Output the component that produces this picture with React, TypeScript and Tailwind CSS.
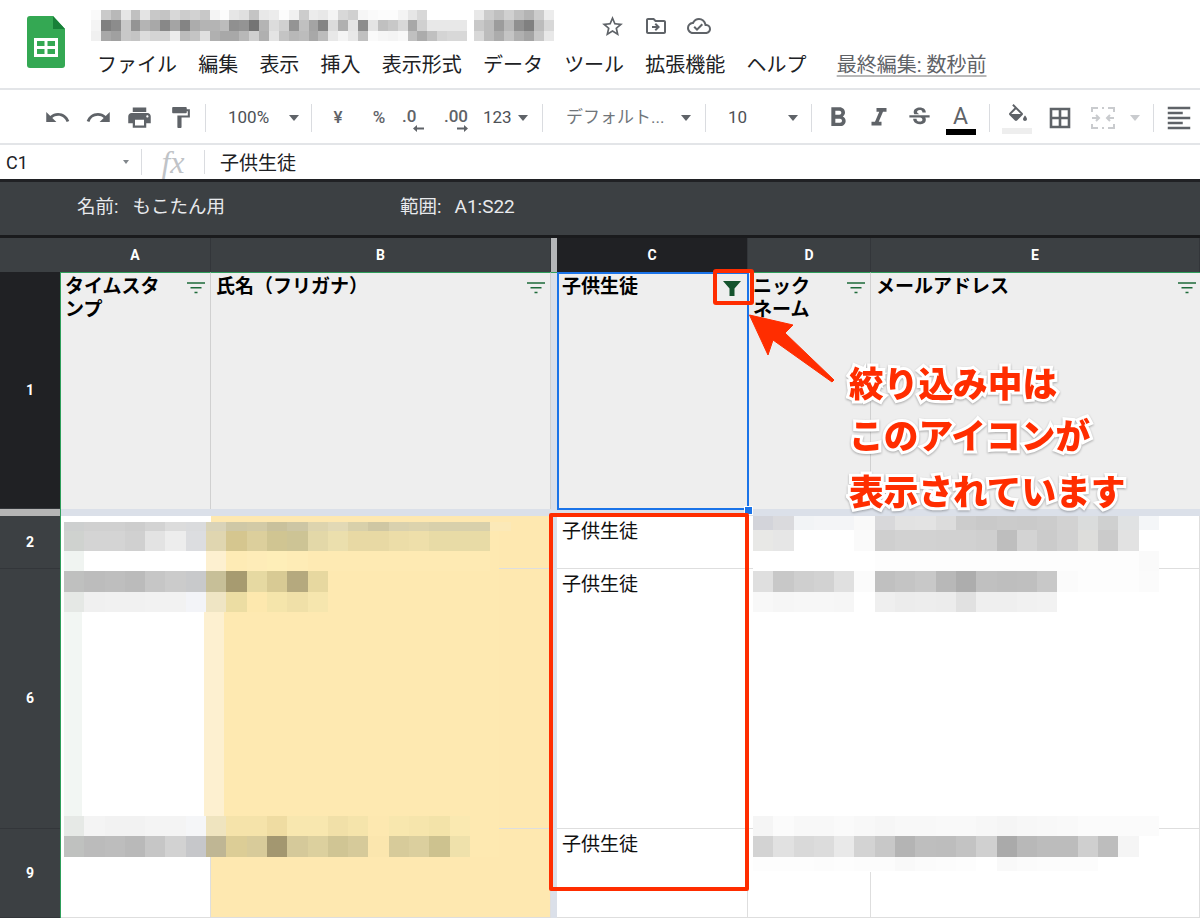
import type { ReactNode } from "react"
import {
  MdUndo,
  MdRedo,
  MdPrint,
  MdFormatPaint,
  MdFormatBold,
  MdFormatItalic,
  MdStrikethroughS,
  MdFormatAlignLeft,
  MdStarBorder,
  MdOutlineDriveFileMove,
  MdOutlineCloudDone,
} from "react-icons/md"

const font = "font-['Roboto','Noto_Sans_CJK_JP',sans-serif]"

// pixelated blur blocks: [height, colours...]
type MosaicRow = { h: number; c: string }

const titleLeft: MosaicRow[] = [
  { h: 10, c: "fafafa cacaca b8b8b8 e6e6e6 c0c0c0 e4e4e4 c8c8c8 c4c4c4 d8d8d8 cccccc d2d2d2 c8c8c8 f4f4f4 fcfcfc e6e6e6 e0e0e0 c4c4c4 e8e8e8 ececec fcfcfc f0f0f0 cccccc ececec e8e8e8 f4f4f4 d8d8d8 d0d0d0 f6f6f6 fafafa fcfcfc fcfcfc f4f4f4 e6e6e6 d8d8d8 ffffff ffffff ffffff ffffff" },
  { h: 11, c: "f4f4f4 808080 8c8c8c c8c8c8 949494 b4b4b4 a8a8a8 888888 a4a4a4 848484 acacac b4b4b4 b4b4b4 bcbcbc 909090 949494 747474 b4b4b4 dcdcdc d0d0d0 949494 c0c0c0 a4a4a4 848484 dcdcdc b0b0b0 e4e4e4 8c8c8c e4e4e4 c0c0c0 c8c8c8 d8d8d8 a8a8a8 d0d0d0 e8e8e8 e8e8e8 e8e8e8 e8e8e8" },
  { h: 10, c: "f0f0f0 a8a8a8 a0a0a0 c8c8c8 c4c4c4 dcdcdc d4d4d4 d4d4d4 ececec bcbcbc c4c4c4 e0e0e0 b0b0b0 a8a8a8 a8a8a8 b8b8b8 d0d0d0 b0b0b0 e4e4e4 c4c4c4 b8b8b8 bcbcbc a8a8a8 bcbcbc e8e8e8 f4f4f4 e8e8e8 c0c0c0 fafafa f6f6f6 f4f4f4 f8f8f8 c0c0c0 acacac c0c0c0 d4d4d4 d8d8d8 d8d8d8" },
]

const titleRight: MosaicRow[] = [
  { h: 10, c: "e8e8e8 cccccc c0c0c0 d0d0d0 c0c0c0 b4b4b4 cccccc ececec" },
  { h: 11, c: "c8c8c8 bcbcbc 9c9c9c b8b8b8 909090 808080 bcbcbc d8d8d8" },
  { h: 10, c: "d8d8d8 bcbcbc acacac c4c4c4 b0b0b0 a4a4a4 c8c8c8 e8e8e8" },
]

const leftTop: MosaicRow[] = [
  { h: 9, c: "cdcfcf d0d0d0 d0d0d0 cdcdcd d3d3d3 dcdcdc dadbdd d9d3b8 cfc8a6 d2caa6 c9c19c cdc6a4 ddd4ae e2d9b5 d8d0aa cfc7a3 d9d1ae dcd3ad d8d0ab d8d0ab d8d0ab fbe9b8" },
  { h: 20, c: "cfd2cf d4d4d4 d4d4d4 d0d0d0 e3e3e3 ededed dcdde0 e0d6b0 d5c68f dccf9c d0c592 cdc495 e3d8a8 ebdfad e8d9a4 e8d9a4 ecdda8 eedfaa e8dba6 e8dba6 e8dba6" },
  { h: 20, c: "f0f4f1 ffffff ffffff ffffff ffffff ffffff ffffff fdf0d0 feebb5 feecb8 feeeb8 feecb6 feeab3 feeab3 feeab3 feeab3 feeab3 feeab3 feeab3 feeab3 feeab3" },
  { h: 21, c: "bfc0bf bcbcbc bebebe bbbbbb c6c6c6 cbcbcb c8c9cb c7bf98 a79b70 e6d9a2 d8ca94 b5a97e e7d8a0" },
  { h: 20, c: "e5e8e5 f0f0f0 f1f1f1 f1f1f1 f2f2f2 f2f2f2 f3f4f8 efe5c4 ecdda3 fde8ae f5e5ab f0e0a8 f6e6ae" },
]

const leftBottom: MosaicRow[] = [
  { h: 20, c: "e6e9e6 f4f4f4 f2f2f2 f2f2f2 f4f4f4 f4f4f4 f5f6f8 efe4bf f5e3aa f5e3aa efdca2 f8e7af f8e7af f1e0a8 f5e4ab fde8b0 f8e7ae f6e5ac f3e3a9 fae9b1" },
  { h: 21, c: "bfc1bf bbbbbb bdbdbd b9b9b9 c6c6c6 d2d2d2 c6c7ca bfb694 dccd96 d8cb9a a39770 d5c99a dcd09e d0c594 d6ca9a fbe6ae d7cb9a dbcf9e cdc28f efe1ab" },
]

const rightTop: MosaicRow[] = [
  { h: 14, c: "d3d4da dadadd f2f4f6 f4f5f7 f4f5f7 f9f9f9 d8d8da e2e2e2 e3e3e3 dcdcdc cccccc c9c9c9 cbcbcb cacaca cccccc d2d2d2 dadcdc cfd0d0 e0e2e3 f4f6f8" },
  { h: 21, c: "e8e8e6 e6e6e6 ffffff ffffff ffffff fafafa cfcfcf d2d2d2 d2d2d2 d1d1d1 d1d1d1 cfcfcf bebebe d3d3d3 cbcbcb d1d1d1 dddddb cbcbcb e2e2e2" },
  { h: 20, c: "ffffff ffffff ffffff ffffff ffffff ffffff fdfdfd fdfdfd fdfdfd fdfdfd fdfdfd fdfdfd fdfdfd fdfdfd fdfdfd fdfdfd fdfdfd fdfdfd fdfdfd fafafa" },
  { h: 21, c: "dfdfdf c8c8c8 cfcfcf d2d2d2 e0e0e0 fbfbfb c0c0c0 c4c4c4 c8c8c8 b8b8b8 adadad c0c0c0 bebebe bfbfbf c8c8c8 fbfbfb fdfdfd fdfdfd fdfdfd fbfbfb" },
  { h: 20, c: "f8f8f8 f6f6f6 f7f7f7 f7f7f7 f6f6f6 ffffff efefef ececec ededed ececec e1e1e1 efefef efefef f1f1f1 f2f2f2" },
]

const rightBottom: MosaicRow[] = [
  { h: 20, c: "f5f5f5 fbfbfb f8f8f8 f8f8f8 fafafa f8f8f8 f6f6f6 f8f8f8 f8f8f8 f9f9f9 f9f9f9 f7f7f7 f5f5f5 f7f7f7 f8f8f8 f9f9f9 fbfbfb fbfbfb fbfbfb fbfbfb" },
  { h: 21, c: "d3d3d3 e1e1e1 d9d9d9 dcdcdc e9e9e9 d3d3d3 c8c8c8 b4b4b4 bebebe bdbdbd c3c3c3 d0d0d0 aaaaaa b8b8b8 bcbcbc bcbcbc cfcfcf bdbdbd f5f5f5" },
  { h: 14, c: "fdfdfd fdfdfd fdfdfd fcfcfc fdfdfd fcfcfc fcfcfc f9f9f9 fbfbfb fcfcfc fdfdfd ffffff f9f9f9 fbfbfb fcfcfc fcfcfc fcfcfc ffffff ffffff" },
]

const Mosaic = ({ rows, size, className }: { rows: MosaicRow[]; size: number; className: string }) => (
  <div className={`absolute flex flex-col ${className}`}>
    {rows.map((row, i) => (
      <div key={i} className="flex">
        {row.c.split(" ").map((c, j) => (
          <div key={j} style={{ width: size, height: row.h, backgroundColor: `#${c}` }} />
        ))}
      </div>
    ))}
  </div>
)

const Sep = ({ className = "" }: { className?: string }) => <div className={`w-px h-[28px] bg-[#dadce0] shrink-0 ${className}`} />

const Caret = ({ className = "" }: { className?: string }) => (
  <div className={`w-0 h-0 shrink-0 border-x-[5.5px] border-x-transparent border-t-[6px] ${className || "border-t-[#5f6368]"}`} />
)

const Tool = ({ children, w = "w-[41px]" }: { children: ReactNode; w?: string }) => (
  <div className={`${w} h-[30px] flex items-center justify-center text-[#5f6368] shrink-0`}>{children}</div>
)

const SheetsLogo = () => (
  <svg width="38" height="52" viewBox="0 0 38 52" className="shrink-0">
    <path d="M3 0h23l12 13v36a3 3 0 0 1-3 3H3a3 3 0 0 1-3-3V3a3 3 0 0 1 3-3z" fill="#34a853" />
    <path d="M26 0l12 13H26z" fill="#188038" />
    <path d="M7 22h24v19H7z" fill="#fff" />
    <path d="M10 25h7.5v5H10zM20.5 25H28v5h-7.5zM10 33h7.5v5H10zM20.5 33H28v5h-7.5z" fill="#34a853" />
  </svg>
)

const FilterLines = () => (
  <svg width="18" height="12" viewBox="0 0 18 12">
    <path d="M0 1h18M3.5 5.8h11M7.5 10.5h3" stroke="#1e6b3a" strokeWidth="1.4" fill="none" />
  </svg>
)

const FilterOn = () => (
  <svg width="18" height="15" viewBox="0 0 18 15">
    <path d="M0 0h18l-6.5 7.5V15h-5V7.5z" fill="#14532d" />
  </svg>
)

const DecimalArrow = ({ d }: { d: string }) => (
  <svg width="11" height="9" viewBox="0 0 11 9">
    <path d={d} fill="#5f6368" />
  </svg>
)

const FillIcon = () => (
  <svg width="24" height="22" viewBox="0 0 24 20" fill="#5f6368">
    <path d="M16.56 8.94L7.62 0 6.21 1.41l2.38 2.38-5.15 5.15c-.59.59-.59 1.54 0 2.12l5.5 5.5c.29.29.68.44 1.06.44s.77-.15 1.06-.44l5.5-5.5c.59-.58.59-1.53 0-2.12zM5.21 10L10 5.21 14.79 10H5.21z" />
    <path d="M4.5 10h11L10 15.5zM19 11.5s-2 2.17-2 3.5c0 1.1.9 2 2 2s2-.9 2-2c0-1.33-2-3.5-2-3.5z" />
  </svg>
)

const BorderIcon = () => (
  <svg width="22" height="22" viewBox="0 0 22 22" fill="none" stroke="#5f6368" strokeWidth="2.6">
    <path d="M2 2h18v18H2zM11 2v18M2 11h18" />
  </svg>
)

const ColHead = ({ label, active }: { label: string; active?: boolean }) => (
  <div className={`flex items-center justify-center text-white text-[14px] font-bold border-r border-[#33363a] ${active ? "bg-[#202124]" : "bg-[#3c4043]"}`}>
    {label}
  </div>
)

const RowHead = ({ label, active }: { label: string; active?: boolean }) => (
  <div className={`flex items-center justify-center text-white text-[14px] font-bold border-b border-[#33363a] ${active ? "bg-[#202124]" : "bg-[#3c4043]"}`}>
    {label}
  </div>
)

const HeadCell = ({ children, filter, last }: { children: ReactNode; filter?: ReactNode; last?: boolean }) => (
  <div className={`bg-[#eeeeee] border-t border-t-[#2e9e5b] flex justify-between pl-[5px] pt-[2px] text-[19px] leading-[23px] font-bold text-black ${last ? "pr-[4px]" : "pr-[5px] border-r border-r-[#d0d0d0]"}`}>
    <div>{children}</div>
    <div className="pt-[7px] shrink-0 flex items-start h-fit">{filter ?? <FilterLines />}</div>
  </div>
)

const BodyCell = ({ bg = "bg-white", children }: { bg?: string; children?: ReactNode }) => (
  <div className={`${bg} border-r border-b border-[#dedede] pl-[5px] pt-[2px] text-[19px] leading-[28px] text-[#111]`}>{children}</div>
)

const Frozen = ({ bg = "bg-[#dbe0e9]" }: { bg?: string }) => <div className={bg} />

export default function App() {
  return (
    <div className={`relative w-[1200px] h-[918px] overflow-hidden bg-white flex flex-col ${font}`}>
      {/* title + menu */}
      <div className="h-[88px] relative flex shrink-0 pl-[27px] pt-[16px]">
        <SheetsLogo />
        <div className="ml-[32px] mt-[35px] flex items-center gap-[21.2px] text-[20px] leading-[28px] text-[#202124] whitespace-nowrap h-[28px]">
          <span>ファイル</span>
          <span>編集</span>
          <span>表示</span>
          <span>挿入</span>
          <span>表示形式</span>
          <span>データ</span>
          <span>ツール</span>
          <span>拡張機能</span>
          <span>ヘルプ</span>
          <span className="ml-[9px] text-[#5f6368] underline decoration-[#b8b8b8] underline-offset-[3px]">最終編集: 数秒前</span>
        </div>
        <Mosaic rows={titleLeft} size={9.9} className="left-[91px] top-[10px]" />
        <Mosaic rows={titleRight} size={10} className="left-[474px] top-[10px]" />
        <div className="absolute left-[600px] top-[14px] flex gap-[19px] text-[#5f6368]">
          <MdStarBorder size={25} />
          <MdOutlineDriveFileMove size={24} />
          <MdOutlineCloudDone size={24} />
        </div>
      </div>

      {/* toolbar */}
      <div className="h-[57px] shrink-0 border-y-2 border-[#e3e5e8] flex items-center pl-[37px] pt-[2px] text-[17px] text-[#4d5156] whitespace-nowrap">
        <Tool><MdUndo size={27} /></Tool>
        <Tool><MdRedo size={27} /></Tool>
        <Tool><MdPrint size={27} /></Tool>
        <Tool><MdFormatPaint size={25} /></Tool>
        <Sep className="ml-[4px] mr-[22px]" />
        <span className="w-[61px] shrink-0">100%</span>
        <Caret />
        <Sep className="ml-[12px]" />
        <Tool w="w-[52px]"><span className="font-medium">¥</span></Tool>
        <Tool w="w-[30px]"><span className="font-medium">%</span></Tool>
        <Tool w="w-[38px]">
          <div className="flex flex-col items-start leading-[17px] font-medium translate-y-[3px]">
            <span>.0</span>
            <div className="ml-[11px] -mt-[1px]"><DecimalArrow d="M11 3.5H4V1L0 4.5 4 8V5.5h7z" /></div>
          </div>
        </Tool>
        <Tool w="w-[48px]">
          <div className="flex flex-col items-end leading-[17px] font-medium translate-y-[3px]">
            <span>.00</span>
            <div className="-mt-[1px]"><DecimalArrow d="M0 3.5h7V1l4 3.5L7 8V5.5H0z" /></div>
          </div>
        </Tool>
        <span className="ml-[3px] w-[30px] shrink-0">123</span>
        <Caret className="ml-[5px] border-t-[#5f6368]" />
        <Sep className="ml-[14px] mr-[23px]" />
        <span className="w-[115px] shrink-0 text-[#70757a]">デフォルト...</span>
        <Caret />
        <Sep className="ml-[14px] mr-[22px]" />
        <span className="w-[60px] shrink-0">10</span>
        <Caret />
        <Sep className="ml-[13px] mr-[5px]" />
        <Tool><MdFormatBold size={32} /></Tool>
        <Tool><MdFormatItalic size={30} /></Tool>
        <Tool><MdStrikethroughS size={27} /></Tool>
        <Tool>
          <div className="flex flex-col items-center text-[23px] leading-[24px] translate-y-[2px]">
            <span className="text-[#5f6368]">A</span>
            <div className="w-[30px] h-[6px] bg-black" />
          </div>
        </Tool>
        <Sep className="ml-[8px] mr-[6px]" />
        <Tool>
          <div className="flex flex-col items-center translate-y-[1px] pl-[3px]">
            <FillIcon />
            <div className="w-[30px] h-[6px] bg-[#eeeeee] mt-[3px] -ml-[3px]" />
          </div>
        </Tool>
        <Tool w="w-[45px]"><BorderIcon /></Tool>
        <Tool>
          <svg width="24" height="24" viewBox="0 0 24 24" fill="none" stroke="#c9cbce" strokeWidth="2">
            <path d="M1 6V2h6M11 2h2M17 2h6v4M1 18v4h6M11 22h2M17 22h6v-4M1 12h7M5 9l3 3-3 3M23 12h-7M19 9l-3 3 3 3" />
          </svg>
        </Tool>
        <Caret className="ml-[7px] border-t-[#c9cbce]" />
        <Sep className="ml-[13px] mr-[4px]" />
        <Tool><MdFormatAlignLeft size={30} /></Tool>
      </div>

      {/* formula bar */}
      <div className="h-[34px] shrink-0 flex items-center text-[19px] text-[#202124] bg-white">
        <span className="w-[123px] pl-[6px] text-[18px]">C1</span>
        <div className="w-0 h-0 border-x-[3.5px] border-x-transparent border-t-[4px] border-t-[#80868b]" />
        <div className="ml-[12px] w-px h-[26px] bg-[#dadce0]" />
        <span className="w-[62px] text-center font-['Liberation_Serif',serif] italic text-[32px] text-[#c0c3c7]">fx</span>
        <div className="w-px h-[24px] bg-[#dadce0]" />
        <span className="ml-[15px] font-['Noto_Sans_CJK_JP',sans-serif]">子供生徒</span>
      </div>

      {/* filter view bar */}
      <div className="h-[59px] shrink-0 bg-[#3c4043] border-y-[3px] border-t-[#202124] border-b-[#1a1b1d] flex items-center pb-[2px] text-[18.5px] text-[#e8eaed] whitespace-nowrap">
        <span className="ml-[77px]">名前:</span>
        <span className="ml-[14px]">もこたん用</span>
        <span className="ml-[175px]">範囲:</span>
        <span className="ml-[13px] text-[19px]">A1:S22</span>
      </div>

      {/* sheet */}
      <div className="relative flex-1 grid grid-cols-[60px_151px_340px_6px_191px_123px_329px] grid-rows-[34px_237px_7px_53px_260px_89px]">
        <div className="bg-[#3c4043]" />
        <ColHead label="A" />
        <ColHead label="B" />
        <div className="bg-[#b4b6b8]" />
        <ColHead label="C" active />
        <ColHead label="D" />
        <ColHead label="E" />

        <RowHead label="1" active />
        <HeadCell>タイムスタ<br />ンプ</HeadCell>
        <HeadCell>氏名（フリガナ）</HeadCell>
        <div className="bg-[#dbe0e9] border-t border-t-[#2e9e5b]" />
        <HeadCell filter={<div className="pr-[1px] -mt-[1px]"><FilterOn /></div>}>子供生徒</HeadCell>
        <HeadCell>ニック<br />ネーム</HeadCell>
        <HeadCell last>メールアドレス</HeadCell>

        <div className="bg-[#b5b5b5]" />
        <div className="col-span-6 bg-[#dbe0e9]" />

        <RowHead label="2" />
        <BodyCell />
        <BodyCell bg="bg-[#fee8b0]" />
        <Frozen />
        <BodyCell>子供生徒</BodyCell>
        <BodyCell />
        <BodyCell />

        <RowHead label="6" />
        <BodyCell />
        <BodyCell bg="bg-[#fee8b0]" />
        <Frozen />
        <BodyCell>子供生徒</BodyCell>
        <BodyCell />
        <BodyCell />

        <RowHead label="9" />
        <BodyCell />
        <BodyCell bg="bg-[#fee8b0]" />
        <Frozen />
        <BodyCell>子供生徒</BodyCell>
        <BodyCell />
        <BodyCell />

        {/* green edge of the filter range */}
        <div className="absolute left-[60px] top-[34px] bottom-0 w-px bg-[#2e9e5b]" />

        {/* blurred area hides the grid lines, sheet starts at y=238 */}
        <div className="absolute left-[61px] top-[278px] w-[150px] h-[6px] bg-white" />
        <div className="absolute left-[61px] top-[284px] w-[143px] h-[335px] bg-white" />
        <div className="absolute left-[204px] top-[284px] w-[295px] h-[335px] bg-[#fee9b1]" />
        <div className="absolute left-[753px] top-[278px] w-[402px] h-[356px] bg-white" />
        <div className="absolute left-[64px] top-[374px] w-[18px] h-[204px] bg-[#f2f6f3]" />
        <div className="absolute left-[204px] top-[374px] w-[20px] h-[204px] bg-[#fdf0d0]" />
        <Mosaic rows={leftTop} size={20.3} className="left-[64px] top-[284px]" />
        <Mosaic rows={leftBottom} size={20.3} className="left-[64px] top-[578px]" />
        <Mosaic rows={rightTop} size={20.3} className="left-[753px] top-[278px]" />
        <Mosaic rows={rightBottom} size={20.3} className="left-[753px] top-[578px]" />

        {/* selected cell */}
        <div className="absolute left-[557px] top-[34px] w-[192px] h-[238px] border-2 border-[#1a73e8] pointer-events-none" />
        <div className="absolute left-[744px] top-[268px] w-[9px] h-[9px] bg-[#1a73e8] border border-white" />
      </div>

      {/* annotation */}
      <div className="absolute left-[713px] top-[269px] w-[41px] h-[36px] border-4 border-[#ff2d00] rounded-[3px]" />
      <div className="absolute left-[549px] top-[513px] w-[200px] h-[378px] border-4 border-[#ff2d00] rounded-[2px]" />
      <svg className="absolute left-[745px] top-[310px]" width="95" height="76" viewBox="0 0 95 76">
        <path d="M4.5 5 L48 15 L40 23 L89 70 L87 72 L28 30 L23 45 Z" fill="#ff2d00" stroke="#ff2d00" strokeLinejoin="round" />
      </svg>
      <div className="absolute left-[849px] top-[365px] flex flex-col gap-[17px] text-[34.7px] leading-[35px] font-black text-[#ff2d00] whitespace-nowrap font-['Noto_Sans_CJK_JP',sans-serif] [-webkit-text-stroke:6px_white] [paint-order:stroke_fill] drop-shadow-[0_1px_1px_rgba(0,0,0,0.3)]">
        <span>絞り込み中は</span>
        <span>このアイコンが</span>
        <span className="mt-[4px]">表示されています</span>
      </div>
    </div>
  )
}
